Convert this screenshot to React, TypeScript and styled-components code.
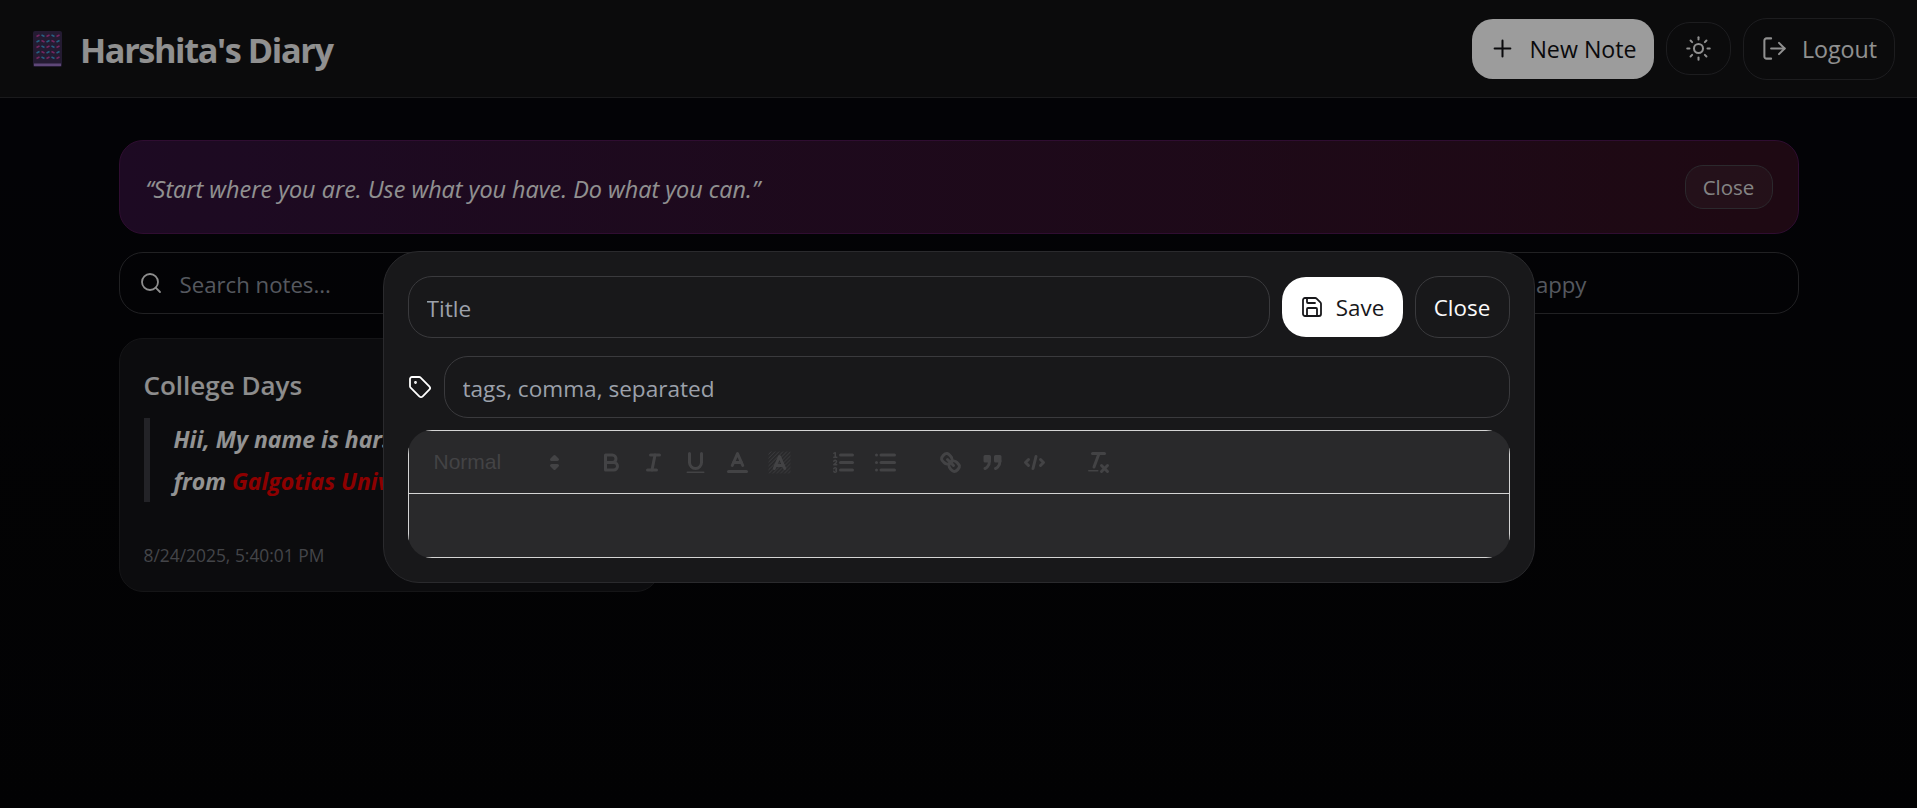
import * as React from 'react'
import styled, { createGlobalStyle } from 'styled-components'
import { LogOut, Plus, Save, Search, Sun, Tag } from 'lucide-react'

const GlobalStyle = createGlobalStyle`
  * { box-sizing: border-box; }
  html, body { margin: 0; height: 100%; }
  body {
    background: linear-gradient(180deg, #06060b 0%, #040406 100%);
    font-family: "Open Sans", "Noto Sans", sans-serif;
    overflow: hidden;
  }
`

const Page = styled.div`
  height: 808px;
  overflow: hidden;
`

const Header = styled.header`
  height: 98px;
  display: flex;
  align-items: center;
  justify-content: space-between;
  padding: 0 22px 0 33px;
  background: #121214;
  border-bottom: 1px solid #2b2b2e;
`

const Brand = styled.div`
  display: flex;
  align-items: center;
  gap: 18px;
`

const BrandName = styled.h1`
  margin: 0;
  padding-top: 2px;
  font-size: 34.3px;
  font-weight: 700;
  letter-spacing: -1.4px;
  color: #ebebeb;
`

const HeaderActions = styled.div`
  display: flex;
  align-items: center;
  gap: 12px;
`

const PrimaryButton = styled.button`
  width: 182px;
  display: flex;
  align-items: center;
  justify-content: center;
  gap: 13px;
  height: 60px;
  border: 0;
  border-radius: 21px;
  background: #ffffff;
  color: #111114;
  font: inherit;
  font-size: 23.2px;
`

const GhostButton = styled.button<{ $height: number; $width: number }>`
  display: flex;
  align-items: center;
  justify-content: center;
  gap: 14px;
  width: ${p => p.$width}px;
  height: ${p => p.$height}px;
  border: 1px solid #303034;
  border-radius: 24px;
  background: transparent;
  color: #ececec;
  font: inherit;
  font-size: 23.2px;
`

const Main = styled.main`
  width: 1680px;
  margin: 0 auto;
  padding-top: 42px;
`

const Banner = styled.div`
  height: 94px;
  display: flex;
  align-items: center;
  justify-content: space-between;
  padding: 0 25px 0 26px;
  border: 1px solid #4d1650;
  border-radius: 24px;
  background: linear-gradient(90deg, #30113a 0%, #31101f 100%);
`

const Quote = styled.p`
  margin: 0;
  padding-top: 3px;
  font-size: 23.4px;
  font-style: italic;
  color: #eeeeee;
`

const BannerClose = styled.button`
  width: 88px;
  height: 44px;
  border: 1px solid #47434a;
  border-radius: 18px;
  background: rgba(255, 255, 255, 0.05);
  color: #d8d8d8;
  font: inherit;
  font-size: 20.5px;
`

const FilterBar = styled.div`
  height: 62px;
  margin-top: 18px;
  display: flex;
  align-items: center;
  padding-left: 19px;
  border: 1px solid #36363a;
  border-radius: 24px;
`

const FilterIcon = styled.span`
  display: flex;
  color: #e8e8e8;
`

const FilterInput = styled.input<{ $end?: boolean }>`
  flex: 1;
  min-width: 0;
  height: 100%;
  padding: 2px ${p => (p.$end ? '211px' : '0')} 0 ${p => (p.$end ? '0' : '17px')};
  border: 0;
  outline: 0;
  background: transparent;
  color: #eee;
  font: inherit;
  font-size: 22.2px;
  text-align: ${p => (p.$end ? 'right' : 'left')};
  &::placeholder { color: #8c919b; opacity: 1; }
`

const NoteGrid = styled.section`
  margin-top: 24px;
  display: grid;
  grid-template-columns: repeat(3, 541px);
  gap: 28px;
`

const NoteCard = styled.article`
  height: 254px;
  padding: 25px 24px 0;
  border: 1px solid #232326;
  border-radius: 24px;
  background: #141417;
`

const NoteTitle = styled.h2`
  margin: 0;
  font-size: 26px;
  line-height: 42px;
  font-weight: 600;
  color: #e6e6e6;
`

const NoteQuote = styled.blockquote`
  margin: 12px 0 0;
  padding-left: 24px;
  border-left: 6px solid #3a3a40;
  font-size: 23px;
  font-weight: 700;
  font-style: italic;
  line-height: 42px;
  color: #f0f0f0;
  white-space: nowrap;
`

const Highlight = styled.span`
  color: #e60000;
`

const NoteDate = styled.div`
  margin-top: 41px;
  font-size: 17.4px;
  color: #6f7178;
`

const Overlay = styled.div`
  position: fixed;
  inset: 0;
  display: flex;
  justify-content: center;
  padding-top: 251px;
  background: rgba(0, 0, 0, 0.39);
`

const Modal = styled.div`
  width: 1152px;
  height: 332px;
  padding: 24px;
  display: flex;
  flex-direction: column;
  gap: 18px;
  border: 1px solid #2a2a2d;
  border-radius: 36px;
  background: #18181a;
`

const ModalRow = styled.div`
  display: flex;
  align-items: center;
  gap: 12px;
`

const ModalInput = styled.input`
  flex: 1;
  min-width: 0;
  height: 62px;
  padding: 2px 18px 0;
  border: 1px solid #3a3a3d;
  border-radius: 24px;
  outline: 0;
  background: transparent;
  color: #eee;
  font: inherit;
  font-size: 22.6px;
  &::placeholder { color: #9ca1ab; opacity: 1; }
`

const SaveButton = styled.button`
  width: 121px;
  height: 60px;
  display: flex;
  align-items: center;
  justify-content: center;
  gap: 12px;
  border: 0;
  border-radius: 24px;
  background: #ffffff;
  color: #18181b;
  font: inherit;
  font-size: 22.4px;
`

const CloseButton = styled.button`
  width: 95px;
  height: 62px;
  border: 1px solid #3a3a3d;
  border-radius: 24px;
  background: transparent;
  color: #fafafa;
  font: inherit;
  font-size: 22.4px;
`

const TagIcon = styled.span`
  display: flex;
  color: #ffffff;
`

// the corners are cut by the radius, the lines themselves stay square
const Editor = styled.div`
  height: 128px;
  margin-top: -6px;
  border-radius: 24px;
  overflow: hidden;
  background: #29292b;
`

const Toolbar = styled.div`
  height: 64px;
  display: flex;
  align-items: center;
  padding: 0 12px;
  border: 1px solid #d4d4d4;
`

const EditorBody = styled.div`
  height: 64px;
  border: 1px solid #d4d4d4;
  border-top: 0;
`

const ToolGroup = styled.div`
  display: flex;
  margin-right: 22.5px;
`

const Picker = styled.div`
  width: 147px;
  height: 36px;
  display: flex;
  align-items: center;
  justify-content: space-between;
  padding-left: 13px;
  font-family: "Liberation Sans", Arial, sans-serif;
  font-size: 21px;
  color: #434345;
`

const ToolButton = styled.div`
  width: 42px;
  height: 36px;
  display: flex;
  align-items: center;
  justify-content: center;
`

const Icon = styled.svg.attrs({ viewBox: '0 0 18 18' })`
  width: 27px;
  height: 27px;
  flex: none;
  fill: none;
  stroke: #434345;
  stroke-width: 2;
  stroke-linecap: round;
  stroke-linejoin: round;
  overflow: visible;
`

const Thin = styled.path`
  stroke-width: 1;
`

const Filled = styled.path`
  fill: #434345;
  stroke: none;
`

// the notebook emoji, drawn since no colour emoji font is around
const NotebookEmoji = () => {
  const cols = [3.5, 8.5, 13.5, 18.5, 23.5]
  const rows = [4, 9.5, 15, 20.5, 26]
  return (
    <svg width="29" height="36" viewBox="0 0 29 36">
      <rect x="0" y="0" width="29" height="36" rx="2" fill="#3b2d52" />
      <rect x="1" y="32.5" width="27" height="2.5" fill="#9a74c4" />
      {rows.map((y, r) =>
        cols.map((x, c) => (
          <line
            key={`${r}-${c}`}
            x1={x}
            x2={x + 3}
            y1={y + (c % 2 ? 0 : 1.5)}
            y2={y + (c % 2 ? 1.5 : 0)}
            stroke={(r + c) % 2 ? '#3f9fd6' : '#c23f9e'}
            strokeWidth="1.4"
          />
        ))
      )}
    </svg>
  )
}

const App = () => {
  return (
    <>
      <GlobalStyle />
      <Page>
        <Header>
          <Brand>
            <NotebookEmoji />
            <BrandName>Harshita's Diary</BrandName>
          </Brand>
          <HeaderActions>
            <PrimaryButton><Plus size={27} strokeWidth={1.8} />New Note</PrimaryButton>
            <GhostButton $height={53} $width={65}><Sun size={27} strokeWidth={1.8} /></GhostButton>
            <GhostButton $height={62} $width={152}><LogOut size={27} strokeWidth={1.8} />Logout</GhostButton>
          </HeaderActions>
        </Header>
        <Main>
          <Banner>
            <Quote>“Start where you are. Use what you have. Do what you can.”</Quote>
            <BannerClose>Close</BannerClose>
          </Banner>
          <FilterBar>
            <FilterIcon><Search size={24} strokeWidth={1.8} /></FilterIcon>
            <FilterInput placeholder="Search notes..." />
            <FilterInput $end placeholder="Filter by tag, e.g. happy" />
          </FilterBar>
          <NoteGrid>
            <NoteCard>
              <NoteTitle>College Days</NoteTitle>
              <NoteQuote>
                Hii, My name is harshita and I am
                <br />
                from <Highlight>Galgotias University</Highlight>
              </NoteQuote>
              <NoteDate>8/24/2025, 5:40:01 PM</NoteDate>
            </NoteCard>
          </NoteGrid>
        </Main>
      </Page>
      <Overlay>
        <Modal>
          <ModalRow>
            <ModalInput placeholder="Title" />
            <SaveButton><Save size={24} strokeWidth={1.8} />Save</SaveButton>
            <CloseButton>Close</CloseButton>
          </ModalRow>
          <ModalRow>
            <TagIcon><Tag size={24} strokeWidth={1.8} /></TagIcon>
            <ModalInput placeholder="tags, comma, separated" />
          </ModalRow>
          <Editor>
            <Toolbar>
              <ToolGroup>
                <Picker>
                  Normal
                  <Icon>
                    <polygon points="7 11 9 13 11 11 7 11" fill="#434345" />
                    <polygon points="7 7 9 5 11 7 7 7" fill="#434345" />
                  </Icon>
                </Picker>
              </ToolGroup>
              <ToolGroup>
                <ToolButton>
                  <Icon>
                    <path d="M5,4H9.5A2.5,2.5,0,0,1,12,6.5v0A2.5,2.5,0,0,1,9.5,9H5A0,0,0,0,1,5,9V4A0,0,0,0,1,5,4Z" />
                    <path d="M5,9h5.5A2.5,2.5,0,0,1,13,11.5v0A2.5,2.5,0,0,1,10.5,14H5a0,0,0,0,1,0,0V9A0,0,0,0,1,5,9Z" />
                  </Icon>
                </ToolButton>
                <ToolButton>
                  <Icon>
                    <line x1="7" x2="13" y1="4" y2="4" />
                    <line x1="5" x2="11" y1="14" y2="14" />
                    <line x1="8" x2="10" y1="14" y2="4" />
                  </Icon>
                </ToolButton>
                <ToolButton>
                  <Icon>
                    <path d="M5,3V9a4.012,4.012,0,0,0,4,4H9a4.012,4.012,0,0,0,4-4V3" />
                    <rect height="1" rx=".5" ry=".5" width="12" x="3" y="15" fill="#434345" stroke="none" />
                  </Icon>
                </ToolButton>
                <ToolButton>
                  <Icon>
                    <line x1="3" x2="15" y1="15" y2="15" />
                    <polyline points="5.5 11 9 3 12.5 11" />
                    <line x1="11.63" x2="6.38" y1="9" y2="9" />
                  </Icon>
                </ToolButton>
                <ToolButton>
                  <Icon>
                    <defs>
                      <pattern id="hatch" width="2.6" height="2.6" patternUnits="userSpaceOnUse">
                        <path d="M0 2.6 L2.6 0" stroke="#434345" strokeWidth="0.55" />
                      </pattern>
                    </defs>
                    <rect x="1.7" y="1.7" width="14.6" height="14.6" fill="url(#hatch)" stroke="none" />
                    <polyline points="5.5 13 9 5 12.5 13" />
                    <line x1="11.63" x2="6.38" y1="11" y2="11" />
                  </Icon>
                </ToolButton>
              </ToolGroup>
              <ToolGroup>
                <ToolButton>
                  <Icon>
                    <line x1="7" x2="15" y1="4" y2="4" />
                    <line x1="7" x2="15" y1="9" y2="9" />
                    <line x1="7" x2="15" y1="14" y2="14" />
                    <Thin as="line" x1="2.5" x2="4.5" y1="5.5" y2="5.5" />
                    <Filled d="M3.5,6A0.5,0.5,0,0,1,3,5.5V3.085l-0.276.138A0.5,0.5,0,0,1,2.053,3c-0.124-.247-0.023-0.324.224-0.447l1-.5A0.5,0.5,0,0,1,4,2.5v3A0.5,0.5,0,0,1,3.5,6Z" />
                    <Thin d="M4.5,10.5h-2c0-.234,1.85-1.076,1.85-2.234A0.959,0.959,0,0,0,2.5,8.156" />
                    <Thin d="M2.5,14.846a0.959,0.959,0,0,0,1.85-.109A0.7,0.7,0,0,0,3.75,14a0.688,0.688,0,0,0,.6-0.736,0.959,0.959,0,0,0-1.85-.109" />
                  </Icon>
                </ToolButton>
                <ToolButton>
                  <Icon>
                    <line x1="6" x2="15" y1="4" y2="4" />
                    <line x1="6" x2="15" y1="9" y2="9" />
                    <line x1="6" x2="15" y1="14" y2="14" />
                    <line x1="3" x2="3" y1="4" y2="4" />
                    <line x1="3" x2="3" y1="9" y2="9" />
                    <line x1="3" x2="3" y1="14" y2="14" />
                  </Icon>
                </ToolButton>
              </ToolGroup>
              <ToolGroup>
                <ToolButton>
                  <Icon>
                    <line x1="7" x2="11" y1="7" y2="11" />
                    <path d="M8.9,4.577a3.476,3.476,0,0,1,.36,4.679A3.476,3.476,0,0,1,4.577,8.9C3.185,7.5,2.035,6.4,4.217,4.217S7.5,3.185,8.9,4.577Z" />
                    <path d="M13.423,9.1a3.476,3.476,0,0,0-4.679-.36,3.476,3.476,0,0,0,.36,4.679c1.392,1.392,2.5,2.542,4.679.36S14.815,10.5,13.423,9.1Z" />
                  </Icon>
                </ToolButton>
                <ToolButton>
                  <Icon>
                    <rect height="3" width="3" x="4" y="5" fill="#434345" />
                    <rect height="3" width="3" x="11" y="5" fill="#434345" />
                    <path d="M7,8c0,4.031-3,5-3,5" />
                    <path d="M14,8c0,4.031-3,5-3,5" />
                  </Icon>
                </ToolButton>
                <ToolButton>
                  <Icon>
                    <polyline points="5 7 3 9 5 11" />
                    <polyline points="13 7 15 9 13 11" />
                    <line x1="10" x2="8" y1="5" y2="13" />
                  </Icon>
                </ToolButton>
              </ToolGroup>
              <ToolGroup>
                <ToolButton>
                  <Icon>
                    <line x1="5" x2="13" y1="3" y2="3" />
                    <line x1="6" x2="9.35" y1="12" y2="3" />
                    <line x1="11" x2="15" y1="11" y2="15" />
                    <line x1="15" x2="11" y1="11" y2="15" />
                    <rect height="1" rx=".5" ry=".5" width="7" x="2" y="14" fill="#434345" stroke="none" />
                  </Icon>
                </ToolButton>
              </ToolGroup>
            </Toolbar>
            <EditorBody />
          </Editor>
        </Modal>
      </Overlay>
    </>
  )
}

export default App
